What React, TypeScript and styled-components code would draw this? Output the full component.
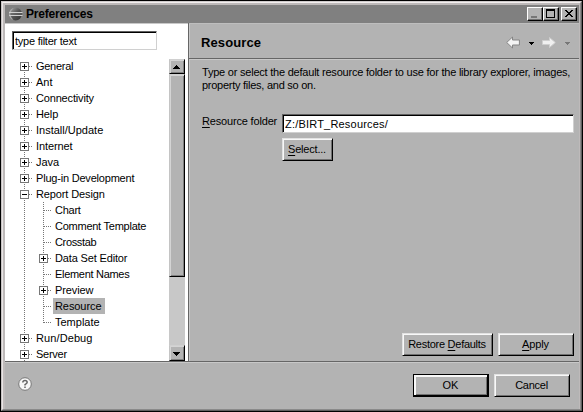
import React from 'react';
import styled, { createGlobalStyle } from 'styled-components';

const FACE = '#b3b3b3';

const GlobalStyle = createGlobalStyle`
  * { box-sizing: border-box; }
  html, body { margin: 0; padding: 0; overflow: hidden; }
  body { font: 11px/13px "Liberation Sans", Arial, sans-serif; color: #000; cursor: default; }
`;

const Frame = styled.div`
  width: 583px;
  height: 412px;
  padding: 1px;
  background: #000;
`;

const Outer = styled.div`
  width: 581px;
  height: 410px;
  border: 1px solid;
  border-color: #d0cccc #606060 #606060 #c8c4c4;
  background: ${FACE};
`;

const Inner = styled.div`
  height: 408px;
  border: 1px solid;
  border-color: #f4f0f0 #8a8a8a #8a8a8a #e8e4e4;
  padding: 2px 1px 0 2px;
  background: #bebaba;
  display: flex;
  flex-direction: column;
`;

const TitleBar = styled.header`
  height: 18px;
  flex: none;
  background: #808080;
  display: flex;
  align-items: center;
  padding: 0 2px 0 3px;
`;

const TitleText = styled.h1`
  margin: 0 auto 0 3px;
  font-size: 12px;
  line-height: 18px;
  font-weight: bold;
  letter-spacing: -0.18px;
`;

const WindowButton = styled.button<{ $gap?: boolean }>`
  width: 16px;
  height: 14px;
  padding: 0;
  margin-left: ${(p) => (p.$gap ? 2 : 0)}px;
  border: 1px solid;
  border-color: #fff #000 #000 #fff;
  box-shadow: inset -1px -1px #707070;
  background: ${FACE};
  svg { display: block; }
`;

const Main = styled.div`
  height: 338px;
  flex: none;
  display: flex;
`;

const Sidebar = styled.aside`
  width: 183px;
  flex: none;
  background: #fff;
  border-top: 1px solid #c8c8c8;
  display: flex;
  flex-direction: column;
`;

const Field = styled.input<{ $filter?: boolean }>`
  display: block;
  height: 19px;
  width: ${(p) => (p.$filter ? '145px' : '292px')};
  margin: ${(p) => (p.$filter ? '7px 0 0 7px' : '0')};
  flex: none;
  padding: 2px 0 1px 2px;
  border: 1px solid;
  border-color: #606060 #d0d0d0 #d0d0d0 #606060;
  box-shadow: inset 1px 1px #000;
  border-radius: 0;
  outline: 0;
  background: #fff;
  color: #000;
  font: 11px/14px "Liberation Sans", Arial, sans-serif;
  letter-spacing: ${(p) => (p.$filter ? '-0.24px' : '0.2px')};
`;

const TreePane = styled.div`
  margin-top: 8px;
  height: 303px;
  display: flex;
  overflow: hidden;
`;

const Tree = styled.ul`
  width: 164px;
  flex: none;
  margin: 0;
  padding: 0 0 0 15px;
  list-style: none;
`;

const TreeRow = styled.li`
  height: 16px;
  display: flex;
  svg { flex: none; display: block; }
`;

const TreeLabel = styled.span<{ $selected?: boolean; $fit: number }>`
  height: 16px;
  line-height: 17px;
  padding: 0 4px 0 2px;
  white-space: nowrap;
  letter-spacing: ${(p) => p.$fit}px;
  background: ${(p) => (p.$selected ? FACE : 'transparent')};
`;

const ScrollBar = styled.div`
  width: 16px;
  flex: none;
  height: 302px;
  margin-top: 1px;
  background: #c8c8c8;
  display: flex;
  flex-direction: column;
`;

const ScrollPiece = styled.div<{ $height: number }>`
  height: ${(p) => p.$height}px;
  flex: none;
  border: 1px solid;
  border-color: #d0d0d0 #000 #000 #c4c4c4;
  box-shadow: inset 1px 1px #d4d4d4, inset -1px -1px #808080;
  background: ${FACE};
  svg { display: block; }
`;

const ScrollTrack = styled.div`
  flex: 1;
`;

const Page = styled.section`
  flex: 1;
  min-width: 0;
  border-left: 1px solid #666;
  box-shadow: inset 1px 0 #c8c8c8;
  background: ${FACE};
  display: flex;
  flex-direction: column;
`;

const PageHeader = styled.div`
  height: 36px;
  flex: none;
  border-top: 1px solid #bebebe;
  border-bottom: 1px solid #666;
  box-shadow: 0 1px #c8c8c8;
  padding: 0 0 0 12px;
  display: flex;
  justify-content: space-between;
`;

const PageTitle = styled.h2`
  margin: 0;
  font-size: 13px;
  line-height: 38px;
  font-weight: bold;
  letter-spacing: 0.1px;
`;

const PageBody = styled.div`
  flex: 1;
  padding: 7px 5px 5px 13px;
  display: flex;
  flex-direction: column;
`;

const Description = styled.p`
  margin: 0 0 22px;
  line-height: 13px;
  white-space: nowrap;
`;

const Line = styled.span<{ $fit: number }>`
  display: block;
  letter-spacing: ${(p) => p.$fit}px;
`;

const FormGrid = styled.div`
  display: grid;
  grid-template-columns: 80px 292px;
  row-gap: 5px;
`;

const FieldLabel = styled.label`
  line-height: 15px;
  white-space: nowrap;
  letter-spacing: -0.17px;
`;

const Mnemonic = styled.span`
  text-decoration: underline;
  text-underline-offset: 2px;
  text-decoration-thickness: 1px;
`;

const PushButton = styled.button<{ $width: number; $column?: number; $primary?: boolean; $fit?: number }>`
  width: ${(p) => p.$width}px;
  height: 23px;
  padding: 0 1px 1px 0;
  grid-column: ${(p) => p.$column ?? 'auto'};
  border: 1px solid;
  border-color: ${(p) => (p.$primary ? '#000' : '#e2e2e2 #000 #000 #e2e2e2')};
  box-shadow: ${(p) =>
    p.$primary
      ? 'inset -1px -1px #000, inset 2px 2px #f8f8f8, inset -2px -2px #707070'
      : 'inset 1px 1px #f8f8f8, inset -1px -1px #707070'};
  background: ${FACE};
  color: #000;
  font: 11px/19px "Liberation Sans", Arial, sans-serif;
  letter-spacing: ${(p) => p.$fit ?? 0}px;
  white-space: nowrap;
`;

const PageActions = styled.div`
  margin-top: auto;
  display: flex;
  justify-content: flex-end;
  gap: 5px;
`;

const Footer = styled.footer`
  flex: 1;
  border-top: 1px solid #666;
  box-shadow: inset 0 1px #c8c8c8;
  background: ${FACE};
  padding: 12px 9px 0 13px;
  display: flex;
  gap: 5px;
`;

const HelpButton = styled.span`
  margin: 3px auto 0 0;
`;

const EclipseLogo = () => (
  <svg width="15" height="14" viewBox="0 0 15 14">
    <defs>
      <linearGradient id="globe" x1="0" y1="0" x2="1" y2="1">
        <stop offset="0" stopColor="#aaa" />
        <stop offset=".5" stopColor="#555" />
        <stop offset="1" stopColor="#303030" />
      </linearGradient>
    </defs>
    <circle cx="7.6" cy="7" r="6.4" fill="url(#globe)" />
    <path d="M5.5 .9A6.4 6.4 0 0 0 5.5 13.1Q2.4 10 2.4 7T5.5.9" fill="#aaa" />
    <path d="M1 5.5h13.5M1 8.5h13.5" stroke="#d0d0d0" />
    <path d="M2.4 7h12" stroke="#666" />
  </svg>
);

const Expander = ({ child, state, first, last }: { child?: boolean; state?: '+' | '-'; first?: boolean; last?: boolean }) => {
  const x = child ? 23.5 : 4.5;
  const dots = { stroke: '#777', strokeDasharray: '1 1', fill: 'none' };
  return (
    <svg width={child ? 33 : 14} height="16" shapeRendering="crispEdges">
      {child && <path d="M4.5 0V16" {...dots} />}
      <path d={`M${x} ${first ? 8 : 0}V${last ? 9 : 16}`} {...dots} />
      <path d={`M${x + 0.5} 8.5H${x + (child ? 8.5 : 8)}`} {...dots} />
      {state && (
        <>
          <rect x={x - 4} y="4.5" width="8" height="8" fill="#fff" stroke="#777" />
          <path d={`M${x - 2.5} 8.5h5${state === '+' ? 'm-2.5 -2.5v5' : ''}`} stroke="#000" />
        </>
      )}
    </svg>
  );
};

const NavIcons = () => (
  <svg width="76" height="36" viewBox="0 0 76 36">
    <path d="M3.7 18.5L9.5 13V16H16.4V21H9.5V24Z" fill="#f4f4f4" stroke="#858585" />
    <path d="M26 18h5v1h-1v1h-1v1h-1v-1h-1v-1h-1z" fill="#000" shapeRendering="crispEdges" />
    <path d="M39.5 16.5H46.5V13.5L52.3 18.5L46.5 23.5V20.5H39.5Z" fill="#f0f0f0" stroke="#cfcfcf" />
    <path d="M62 18h5v1h-1v1h-1v1h-1v-1h-1v-1h-1z" fill="#777" shapeRendering="crispEdges" />
  </svg>
);

type Item = { label: string; fit?: number; state?: '+' | '-'; child?: boolean; selected?: boolean };

const items: Item[] = [
  { label: 'General', state: '+', fit: -0.28 },
  { label: 'Ant', state: '+' },
  { label: 'Connectivity', state: '+', fit: -0.17 },
  { label: 'Help', state: '+', fit: -0.1 },
  { label: 'Install/Update', state: '+' },
  { label: 'Internet', state: '+', fit: -0.1 },
  { label: 'Java', state: '+' },
  { label: 'Plug-in Development', state: '+', fit: -0.2 },
  { label: 'Report Design', state: '-', fit: -0.12 },
  { label: 'Chart', child: true, fit: -0.25 },
  { label: 'Comment Template', child: true, fit: -0.25 },
  { label: 'Crosstab', child: true, fit: -0.35 },
  { label: 'Data Set Editor', child: true, state: '+', fit: -0.15 },
  { label: 'Element Names', child: true, fit: -0.3 },
  { label: 'Preview', child: true, state: '+', fit: -0.1 },
  { label: 'Resource', child: true, selected: true, fit: -0.08 },
  { label: 'Template', child: true },
  { label: 'Run/Debug', state: '+', fit: 0.1 },
  { label: 'Server', state: '+', fit: -0.25 },
];

export default function App() {
  return (
    <>
      <GlobalStyle />
      <Frame>
        <Outer>
          <Inner>
            <TitleBar>
              <EclipseLogo />
              <TitleText>Preferences</TitleText>
              <WindowButton aria-label="Minimize">
                <svg width="14" height="12"><path d="M3 8h6v2H3z" fill="#777" /></svg>
              </WindowButton>
              <WindowButton aria-label="Maximize">
                <svg width="14" height="12" shapeRendering="crispEdges">
                  <path d="M2 1h9v9H2zM3 3v6h7V3z" fillRule="evenodd" />
                </svg>
              </WindowButton>
              <WindowButton aria-label="Close" $gap>
                <svg width="14" height="12" shapeRendering="crispEdges">
                  <path d="M3 2h2v1h1v1h2V3h1V2h2v1h-1v1H9v1H8v1h1v1h1v1h1v1H9V8H8V7H6v1H5v1H3V8h1V7h1V6h1V5H5V4H4V3H3z" />
                </svg>
              </WindowButton>
            </TitleBar>
            <Main>
              <Sidebar>
                <Field $filter defaultValue="type filter text" aria-label="Filter" />
                <TreePane>
                  <Tree>
                    {items.map((item, i) => (
                      <TreeRow key={item.label}>
                        <Expander child={item.child} state={item.state} first={i === 0} last={item.label === 'Template'} />
                        <TreeLabel $selected={item.selected} $fit={item.fit ?? 0}>{item.label}</TreeLabel>
                      </TreeRow>
                    ))}
                  </Tree>
                  <ScrollBar>
                    <ScrollPiece $height={15}>
                      <svg width="14" height="13" shapeRendering="crispEdges"><path d="M6 5h1v1h1v1h1v1h1v1H3V8h1V7h1V6h1z" /></svg>
                    </ScrollPiece>
                    <ScrollPiece $height={203} />
                    <ScrollTrack />
                    <ScrollPiece $height={16}>
                      <svg width="14" height="14" shapeRendering="crispEdges"><path d="M3 6h7v1H9v1H8v1H7v1H6V9H5V8H4V7H3z" /></svg>
                    </ScrollPiece>
                  </ScrollBar>
                </TreePane>
              </Sidebar>
              <Page>
                <PageHeader>
                  <PageTitle>Resource</PageTitle>
                  <NavIcons />
                </PageHeader>
                <PageBody>
                  <Description>
                    <Line $fit={-0.22}>Type or select the default resource folder to use for the library explorer, images,</Line>
                    <Line $fit={-0.26}>property files, and so on.</Line>
                  </Description>
                  <FormGrid>
                    <FieldLabel htmlFor="folder"><Mnemonic>R</Mnemonic>esource folder</FieldLabel>
                    <Field id="folder" defaultValue="Z:/BIRT_Resources/" />
                    <PushButton $width={51} $column={2} $fit={-0.2}><Mnemonic>S</Mnemonic>elect...</PushButton>
                  </FormGrid>
                  <PageActions>
                    <PushButton $width={91} $fit={-0.27}>Restore <Mnemonic>D</Mnemonic>efaults</PushButton>
                    <PushButton $width={76} $fit={-0.15}><Mnemonic>A</Mnemonic>pply</PushButton>
                  </PageActions>
                </PageBody>
              </Page>
            </Main>
            <Footer>
              <HelpButton>
                <svg width="14" height="14" viewBox="0 0 14 14">
                  <circle cx="7" cy="7" r="6.3" fill="#f8f8f8" stroke="#777" />
                  <path d="M4.8 5.5Q4.9 3.5 7 3.5T9.2 5.3Q9.2 6.4 7 7.6V8.5M7 9.5V11" fill="none" stroke="#666" strokeWidth="1.5" />
                </svg>
              </HelpButton>
              <PushButton $width={76} $primary>OK</PushButton>
              <PushButton $width={76} $fit={-0.25}>Cancel</PushButton>
            </Footer>
          </Inner>
        </Outer>
      </Frame>
    </>
  );
}
